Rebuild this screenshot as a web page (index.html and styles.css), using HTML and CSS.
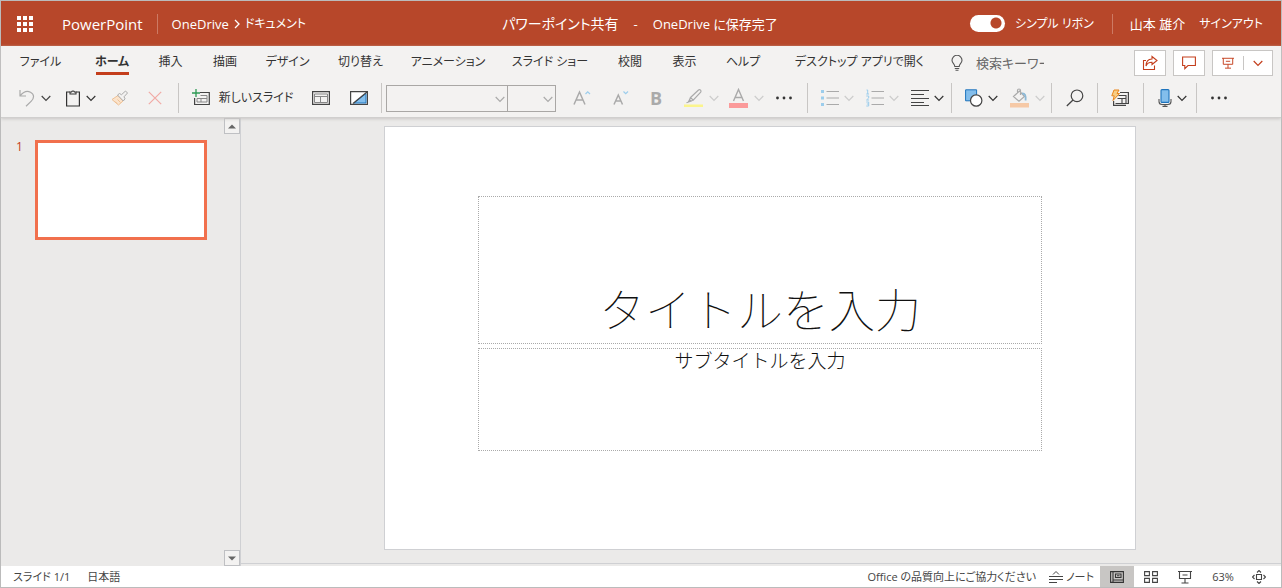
FILE: index.html
```html
<!DOCTYPE html>
<html lang="ja">
<head>
<meta charset="utf-8">
<title>パワーポイント共有</title>
<link rel="stylesheet" href="styles.css">
</head>
<body>
<svg class="defs" aria-hidden="true">
  <symbol id="chev" viewBox="0 0 10 10"><path d="M.7 3 5 7.3 9.3 3" fill="none" stroke="currentColor" stroke-width="1.2"/></symbol>
  <symbol id="dots" viewBox="0 0 18 18"><g fill="currentColor"><circle cx="2.5" cy="9" r="1.4"/><circle cx="9" cy="9" r="1.4"/><circle cx="15.5" cy="9" r="1.4"/></g></symbol>
  <symbol id="present" viewBox="0 0 14 14"><path d="M0 1.500h14M1.500 1.500v7h11v-7M7 8.500v4.500M3.500 13h7M4.500 5h5" fill="none" stroke="currentColor" stroke-width="1.100"/></symbol>
</svg>
<div class="app">
  <header class="titlebar">
    <div class="brand">
      <button class="launcher" aria-label="アプリ起動ツール"><svg width="16" height="16" viewBox="0 0 16 16"><path fill="#fff" d="M0 0h4v4H0zM6 0h4v4H6zM12 0h4v4h-4zM0 6h4v4H0zM6 6h4v4H6zM12 6h4v4h-4zM0 12h4v4H0zM6 12h4v4H6zM12 12h4v4h-4z"/></svg></button>
      <a class="product" href="#">PowerPoint</a>
      <span class="bar"></span>
      <nav class="crumbs"><a href="#">OneDrive</a><svg width="6" height="10" viewBox="0 0 6 10"><path d="M1 1l4 4-4 4" fill="none" stroke="#fff" stroke-width="1.3"/></svg><a class="folder" href="#">ドキュメント</a></nav>
    </div>
    <div class="doc"><span class="docname">パワーポイント共有</span><span>-</span><span>OneDrive に保存完了</span></div>
    <div class="account">
      <label class="switch"><input type="checkbox" checked><span>シンプル リボン</span></label>
      <span class="bar"></span>
      <span class="user">山本 雄介</span>
      <a href="#">サインアウト</a>
    </div>
  </header>

  <div class="ribbon">
    <div class="tabrow">
      <nav class="tabs">
        <button>ファイル</button>
        <button class="current">ホーム</button>
        <button>挿入</button>
        <button>描画</button>
        <button>デザイン</button>
        <button>切り替え</button>
        <button>アニメーション</button>
        <button>スライド ショー</button>
        <button>校閲</button>
        <button>表示</button>
        <button>ヘルプ</button>
        <button>デスクトップ アプリで開く</button>
      </nav>
      <label class="search"><svg width="12" height="16" viewBox="0 0 12 16"><path d="M3.800 11.500C3.800 9 1 8.300 1 5.300a5 5 0 0 1 10 0c0 3-2.800 3.700-2.800 6.200zM3.800 13.500h4.400M4.500 15.300h3" fill="none" stroke="#555" stroke-width="1.100"/></svg><input type="text" aria-label="検索" placeholder="検索キーワード"></label>
      <div class="actions">
        <button aria-label="共有"><svg width="16" height="16" viewBox="0 0 16 16"><path d="M4 5.500H1.500v9h11V10.500M10 1.500l5 4-5 4V7.300C7 7.300 5 8.300 4 11c0-4.300 2.500-6.800 6-7z" fill="none" stroke="currentColor" stroke-width="1.100"/></svg></button>
        <button aria-label="コメント"><svg width="14" height="14" viewBox="0 0 14 14"><path d="M.6 1h12.800v8.500H6l-3.200 3.200V9.500H.6z" fill="none" stroke="currentColor" stroke-width="1.100"/></svg></button>
        <button class="split" aria-label="スライド ショー"><svg width="12" height="14"><use href="#present"/></svg><i></i><svg width="10" height="10"><use href="#chev"/></svg></button>
      </div>
    </div>

    <div class="toolbar" role="toolbar">
      <button class="off" aria-label="元に戻す"><svg width="18" height="18" viewBox="0 0 18 18"><path d="M2 1v6h6M2.300 6.700C5 3.300 9 1.500 12.500 3.200c4 2 3.800 6 .8 9L8 17.300" fill="none" stroke="currentColor" stroke-width="1.200"/></svg><svg class="on" width="10" height="10"><use href="#chev"/></svg></button>
      <button aria-label="貼り付け"><svg width="16" height="18" viewBox="0 0 16 18"><path d="M5 3H1.600v14h12.800V3H11" fill="none" stroke="currentColor" stroke-width="1.200"/><path d="M5 5V3h1.500a1.600 1.600 0 0 1 3 0H11v2z" fill="none" stroke="currentColor" stroke-width="1.100"/></svg><svg width="10" height="10"><use href="#chev"/></svg></button>
      <button class="off" aria-label="書式のコピー"><svg width="18" height="16" viewBox="0 0 18 16"><path d="M1 9.500l6-4 5 5.500-4.500 4z" fill="#fbe3cb" stroke="#eec195"/><path d="M4 11.500l2 2M6.500 9.500l3 3" stroke="#eec195"/><path d="M6.500 5l2-1.500 2 1.200L14.500 1l2 2L13 6.800l1 2L12.300 11z" fill="#f3f2f1" stroke="#aaa"/></svg></button>
      <button class="off" aria-label="削除"><svg width="14" height="14" viewBox="0 0 14 14"><path d="M.8.8l12.400 12.400M13.200.8.8 13.200" stroke="#f1aaa5" stroke-width="1.200"/></svg></button>
      <span class="sep"></span>
      <button class="wide"><svg width="18" height="18" viewBox="0 0 18 18"><path d="M8 3.500h9.300v12H2.600V9" fill="none" stroke="#444" stroke-width="1.200"/><path d="M8.500 6.500H15M5 9.500V13h10V6.500M5 9.500h10M9 9.500v3.500" fill="none" stroke="#888"/><path d="M4 0v8M0 4h8" stroke="#2e9a55" stroke-width="1.300"/></svg><span>新しいスライド</span></button>
      <button aria-label="レイアウト"><svg width="18" height="14" viewBox="0 0 18 14"><path d="M.6.6h16.800v12.800H.6z" fill="none" stroke="#444" stroke-width="1.200"/><path d="M2.500 3h13v8.500h-13zM2.500 5.500h13M8.500 5.500v6" fill="none" stroke="#888"/></svg></button>
      <button aria-label="デザイナー"><svg width="18" height="14" viewBox="0 0 18 14"><path d="M.6.6h16.800v12.800H.6z" fill="#fff" stroke="#444" stroke-width="1.200"/><path d="M16 2.500V12H4z" fill="#83beec" stroke="#1e74bd"/><path d="M17 1 3 12.500" stroke="#444" stroke-width="1.200"/></svg></button>
      <span class="sep"></span>
      <div class="fonts">
        <span class="combo family"><select aria-label="フォント" disabled><option></option></select><svg width="10" height="10"><use href="#chev"/></svg></span>
        <span class="combo size"><select aria-label="フォント サイズ" disabled><option></option></select><svg width="10" height="10"><use href="#chev"/></svg></span>
      </div>
      <button class="off" aria-label="フォントの拡大"><svg width="18" height="18" viewBox="0 0 18 18"><path d="M1 15.500 6.500 3l5.500 12.500M3 11h7" fill="none" stroke="currentColor" stroke-width="1.500"/><path d="M12.500 5l2.200-2.200L17 5" fill="none" stroke="#9ccdec" stroke-width="1.200"/></svg></button>
      <button class="off" aria-label="フォントの縮小"><svg width="16" height="18" viewBox="0 0 16 18"><path d="M1 15.500 5.300 6l4.200 9.500M2.700 12h5.200" fill="none" stroke="currentColor" stroke-width="1.500"/><path d="M10.500 2.500l2.200 2.200L15 2.500" fill="none" stroke="#9ccdec" stroke-width="1.200"/></svg></button>
      <button class="off bold">B</button>
      <button class="off" aria-label="蛍光ペン"><svg width="20" height="20" viewBox="0 0 20 20"><path d="M0 16.500h19V19H0z" fill="#fbf58d"/><path d="M6.500 9.500l8-7.500c1.500-1 3.200.8 2.200 2.200l-7.500 8zM6.500 9.500l-2 4.500 4.700-1.800M4.500 14l-2 .8" fill="none" stroke="currentColor" stroke-width="1.200"/><path d="M5.500 11l2.500 2-3.500 1z" fill="currentColor"/></svg><svg class="faint" width="10" height="10"><use href="#chev"/></svg></button>
      <button class="off" aria-label="フォントの色"><svg width="20" height="20" viewBox="0 0 20 20"><path d="M0 15h19v5H0z" fill="#fb9a9a"/><path d="M4.500 13 9.500 1.500 14.500 13M6 9.500h7" fill="none" stroke="currentColor" stroke-width="1.400"/></svg><svg class="faint" width="10" height="10"><use href="#chev"/></svg></button>
      <button aria-label="その他"><svg width="18" height="18"><use href="#dots"/></svg></button>
      <span class="sep"></span>
      <button class="off" aria-label="箇条書き"><svg width="18" height="18" viewBox="0 0 18 18"><path d="M0 1h3v3H0zM0 7.500h3v3H0zM0 14h3v3H0z" fill="#9ccdec"/><path d="M5.500 2.500H18M5.500 9H18M5.500 15.500H18" stroke="currentColor"/></svg><svg class="faint" width="10" height="10"><use href="#chev"/></svg></button>
      <button class="off" aria-label="段落番号"><svg width="18" height="18" viewBox="0 0 18 18"><path d="M.5 1h1.200v4M.3 5h2.700M.3 7h2.400v2L.5 11h2.500M.3 13h2.400v4H.3M.8 15h2" fill="none" stroke="#9ccdec"/><path d="M5.500 2.500H18M5.500 9H18M5.500 15.500H18" stroke="currentColor"/></svg><svg class="faint" width="10" height="10"><use href="#chev"/></svg></button>
      <button aria-label="配置"><svg width="18" height="18" viewBox="0 0 18 18"><path d="M0 1.500h18M0 5.500h13M0 9.500h18M0 13.500h13M0 16.500h18" stroke="#444" stroke-width="1.200"/></svg><svg width="10" height="10"><use href="#chev"/></svg></button>
      <span class="sep"></span>
      <button aria-label="図形"><svg width="18" height="18" viewBox="0 0 18 18"><path d="M.6.8h11v11H.6z" fill="#83beec" stroke="#1e74bd"/><circle cx="11.200" cy="11.500" r="5.700" fill="#fff" stroke="#444" stroke-width="1.200"/></svg><svg width="10" height="10"><use href="#chev"/></svg></button>
      <button class="off" aria-label="塗りつぶし"><svg width="20" height="20" viewBox="0 0 20 20"><path d="M0 15h19v4.500H0z" fill="#f6c9a6"/><path d="M3.500 8.500 9.500 3l5 5.500-5.500 4.800zM7.500 5V2.500a1.500 1.500 0 0 1 3 0V7" fill="none" stroke="currentColor" stroke-width="1.200"/><path d="M12 5.500c3-.3 4 2 3.600 7" fill="none" stroke="#8db9d6" stroke-width="1.800"/></svg><svg class="faint" width="10" height="10"><use href="#chev"/></svg></button>
      <span class="sep"></span>
      <button aria-label="検索"><svg width="18" height="18" viewBox="0 0 18 18"><circle cx="11" cy="6.800" r="5.800" fill="none" stroke="#444" stroke-width="1.200"/><path d="M7 11l-6.200 6" stroke="#444" stroke-width="1.300"/></svg></button>
      <span class="sep"></span>
      <button aria-label="デザイン アイデア"><svg width="18" height="18" viewBox="0 0 18 18"><path d="M9 3.500h8.400v11H15M2.600 12v4.400h12.400" fill="none" stroke="#444" stroke-width="1.200"/><path d="M7.500 6.500H15v8H4.500M6.500 9.500H15M11 9.500v5" fill="none" stroke="#444" stroke-width="1.100"/><path d="M3 1h5L6 4.500h2.500L2 11.500l1.200-4.700H.8z" fill="#f8cd84" stroke="#e8861c"/></svg></button>
      <span class="sep"></span>
      <button aria-label="ディクテーション"><svg width="14" height="18" viewBox="0 0 14 18"><rect x="3" y=".6" width="8" height="12.800" rx="1" fill="#83beec" stroke="#1e74bd" stroke-width="1.100"/><path d="M1 10v2.500C1 14.500 2.500 15.500 4 15.500h6c1.500 0 3-1 3-3V10M7 15.500v2M4.500 17.400h5" fill="none" stroke="#555" stroke-width="1.100"/></svg><svg width="10" height="10"><use href="#chev"/></svg></button>
      <span class="sep"></span>
      <button aria-label="その他のオプション"><svg width="18" height="18"><use href="#dots"/></svg></button>
    </div>
  </div>

  <main class="workspace">
    <aside class="thumbs">
      <div class="thumb"><span>1</span><button aria-label="スライド 1"></button></div>
      <div class="scroller">
        <button aria-label="上へ"><svg width="8" height="5" viewBox="0 0 8 5"><path d="M0 4.500 4 .5l4 4z" fill="#666"/></svg></button>
        <button aria-label="下へ"><svg width="8" height="5" viewBox="0 0 8 5"><path d="M0 .5h8l-4 4z" fill="#666"/></svg></button>
      </div>
    </aside>
    <section class="canvas">
      <div class="slide">
        <h1 class="holder title">タイトルを入力</h1>
        <div class="holder subtitle">サブタイトルを入力</div>
      </div>
    </section>
  </main>

  <footer class="status">
    <span>スライド 1/1</span>
    <span class="lang">日本語</span>
    <a class="feedback" href="#">Office の品質向上にご協力ください</a>
    <button class="notes"><svg width="14" height="12" viewBox="0 0 14 12"><path d="M0 5.500h14M0 8.500h14M0 11.500h8M4 3.500l3-3 3 3" fill="none" stroke="currentColor"/></svg><span>ノート</span></button>
    <button class="view active" aria-label="標準"><svg width="14" height="12" viewBox="0 0 14 12"><path d="M.6.6h12.800v10.800H.6zM3 .6v10.800M3 9h10.400M5.500 3h5.500v3.500H5.500zM7 4.800h2.500" fill="none" stroke="#333" stroke-width="1.100"/></svg></button>
    <button class="view" aria-label="一覧"><svg width="14" height="12" viewBox="0 0 14 12"><path d="M.6.6h4.800v4H.6zM8.600.6h4.800v4H8.600zM.6 7.400h4.800v4H.6zM8.600 7.400h4.800v4H8.600z" fill="none" stroke="currentColor" stroke-width="1.100"/></svg></button>
    <button class="view" aria-label="スライド ショー"><svg width="14" height="14"><use href="#present"/></svg></button>
    <button class="zoom">63%</button>
    <button class="fit" aria-label="ウィンドウに合わせる"><svg width="14" height="14" viewBox="0 0 14 14"><path d="M4.500 4.500h5v5h-5zM5 2.500l2-2 2 2M5 11.500l2 2 2-2M2.500 5l-2 2 2 2M11.500 5l2 2-2 2" fill="none" stroke="currentColor" stroke-width="1.100"/></svg></button>
  </footer>
</div>
</body>
</html>
```
FILE: styles.css
```css
* { box-sizing: border-box; }

body {
  margin: 0;
  font: 12px/20px "Open Sans", "Noto Sans CJK JP", sans-serif;
  font-feature-settings: "palt";
  color: #333;
  white-space: nowrap;
}

button, input, select { font: inherit; font-feature-settings: inherit; color: inherit; }
button {
  display: flex;
  align-items: center;
  justify-content: center;
  margin: 0;
  padding: 0;
  border: 0;
  background: none;
}
a { color: inherit; text-decoration: none; }
svg { flex: none; display: block; }
.defs { position: absolute; width: 0; height: 0; }

.app {
  display: flex;
  flex-direction: column;
  min-height: 100vh;
  border: 1px solid #bbb;
  background: #ebeae9;
}

/* Title bar */
.titlebar {
  display: grid;
  grid-template-columns: 1fr auto 1fr;
  align-items: center;
  height: 45px;
  padding: 0 18px 0 16px;
  background: #b7472a;
  color: #fff;
}
.brand, .account, .crumbs, .doc, .switch { display: flex; align-items: center; }
.product { margin: 0 14px 0 29px; font-size: 15px; }
.bar { width: 1px; height: 20px; background: #cd7a64; }
.crumbs { gap: 5px; margin-left: 14px; font-size: 13px; }
.folder { font-size: 12px; }
.doc { gap: 15px; font-size: 13px; }
.docname { font-size: 14px; }
.account { justify-content: flex-end; }
.account .bar { margin: 0 17px 0 18px; }
.user { margin-right: 14px; font-size: 13px; }
.switch { gap: 10px; }
.switch input {
  appearance: none;
  width: 35px;
  height: 17px;
  margin: 0;
  border-radius: 9px;
  background: radial-gradient(circle at 26px 8px, #b7472a 5px, #fff 6px);
}

/* Ribbon */
.ribbon {
  position: relative;
  height: 72px;
  border-bottom: 1px solid #d0cfce;
  background: #f3f2f1;
  box-shadow: 0 1px 3px #c8c6c4;
}
.tabrow { display: flex; align-items: center; height: 34px; padding: 0 8px 0 6px; }
.tabs {
  display: grid;
  grid-template-columns: 67px 76px 41px 68px 57px 89px 86px 118px 42px 67px 50px 183px;
}
.tabs button { height: 32px; padding-bottom: 2px; }
.tabs .current {
  font-weight: 700;
  background: linear-gradient(#c43e1c, #c43e1c) center bottom 4px / 33px 3px no-repeat;
}
.search { display: flex; align-items: center; gap: 13px; }
.search input { width: 68px; padding: 0; border: 0; background: none; font-size: 13px; }
.search input::placeholder { color: #666; opacity: 1; }
.actions { display: flex; gap: 7px; margin-left: auto; color: #c43e1c; }
.actions button { width: 32px; height: 26px; border: 1px solid #c8c6c4; background: #fff; }
.actions .split { gap: 9px; width: 61px; }
.split i { width: 1px; height: 14px; background: #c8c6c4; }

.toolbar {
  display: grid;
  grid-template-columns:
    45px 46px 34px 36px 11px 117px 40px 36px 9px 170px 52px 26px 44px 46px 44px 32px
    15px 44px 46px 44px 5px 55px 36px 12px 35px 10px 35px 13px 44px 4px 41px;
  align-items: center;
  height: 36px;
  padding-left: 11px;
}
.toolbar button { gap: 5px; height: 30px; }
.toolbar .wide { gap: 9px; }
.sep { justify-self: center; width: 1px; height: 30px; background: #c8c6c4; }
.off { color: #aaa; }
.off .on { color: #444; }
.off .faint { color: #ccc; }
.toolbar .bold { font-size: 18px; font-weight: 700; }
.fonts { display: flex; }
.combo { position: relative; color: #aaa; }
.combo select {
  appearance: none;
  display: block;
  width: 100%;
  height: 27px;
  border: 1px solid #8a8886;
  border-radius: 0;
  background: #f3f2f1;
}
.combo svg { position: absolute; top: 9px; right: 3px; pointer-events: none; }
.family { width: 122px; }
.size { flex: 1; }
.size select { border-left: 0; }

/* Workspace */
.workspace { display: flex; flex: 1; }
.thumbs {
  display: flex;
  justify-content: space-between;
  width: 240px;
  border-right: 1px solid #cfd0d3;
}
.thumb { display: flex; gap: 10px; padding: 22px 0 0 15px; color: #c43e1c; }
.thumb span { width: 9px; height: 14px; line-height: 14px; }
.thumb button { width: 172px; height: 100px; border: 3px solid #f1704d; background: #fff; }
.scroller { display: flex; flex-direction: column; justify-content: space-between; }
.scroller button { width: 16px; height: 16px; border: 1px solid #bfc0c3; background: #f3f2f1; }
.canvas {
  flex: 1;
  padding: 8px 2px 13px 0;
  margin-bottom: 2px;
  border-bottom: 1px solid #cfd0d3;
}
.slide {
  display: flex;
  flex-direction: column;
  align-items: center;
  gap: 4px;
  width: 752px;
  max-width: 100%;
  aspect-ratio: 752 / 424;
  margin: 0 auto;
  padding-top: 69px;
  border: 1px solid #cfd0d3;
  background: #fff;
  color: #111;
  font-feature-settings: normal;
}
.holder {
  display: flex;
  justify-content: center;
  width: calc(75% + 2px);
  margin: 0;
  border: 1px dotted #aaa;
  font-family: "Noto Sans CJK JP", sans-serif;
}
.title { align-items: flex-end; height: 148px; font-size: 46px; font-weight: 100; line-height: 72px; }
.subtitle { height: 103px; font-size: 19px; font-weight: 300; line-height: 22px; }

/* Status bar */
.status {
  display: flex;
  align-items: center;
  height: 21px;
  padding: 0 7px 0 12px;
  background: #fff;
  color: #444;
  font-size: 11px;
}
.lang { margin-left: 17px; }
.feedback { margin-left: auto; }
.notes { gap: 3px; margin: 0 6px 0 13px; }
.view { width: 34px; height: 21px; }
.active { background: #c8c6c4; }
.zoom { width: 42px; }
.fit { width: 30px; }
```
